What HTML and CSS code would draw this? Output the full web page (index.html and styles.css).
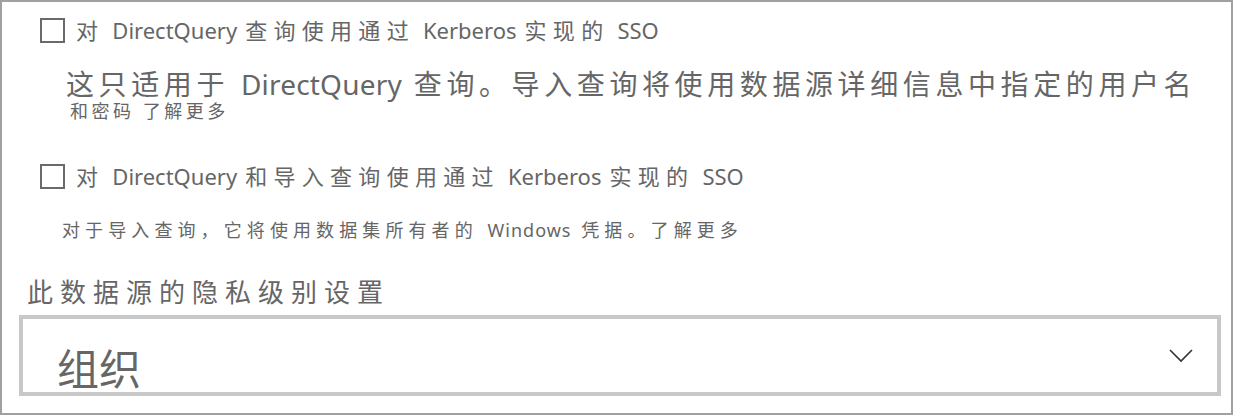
FILE: index.html
```html
<!DOCTYPE html>
<html lang="zh-CN">
<head>
<meta charset="utf-8">
<link rel="stylesheet" href="styles.css">
</head>
<body>
<div class="panel">
  <div class="check-row first">
    <span class="box"></span>
    <span class="label">对 <span class="en">DirectQuery</span> 查询使用通过 <span class="en">Kerberos</span> 实现的 <span class="en">SSO</span></span>
  </div>
  <div class="note-big">这只适用于 <span class="en">DirectQuery</span> 查询。导入查询将使用数据源详细信息中指定的用户名</div>
  <div class="note-tail">和密码 了解更多</div>
  <div class="check-row second">
    <span class="box"></span>
    <span class="label">对 <span class="en">DirectQuery</span> 和导入查询使用通过 <span class="en">Kerberos</span> 实现的 <span class="en">SSO</span></span>
  </div>
  <div class="note-small">对于导入查询，它将使用数据集所有者的 <span class="en">Windows</span> 凭据。了解更多</div>
  <div class="heading">此数据源的隐私级别设置</div>
  <div class="select">
    <span class="value">组织</span>
    <svg class="chev" width="24" height="14" viewBox="0 0 24 14"><path d="M1 1 L12 12 L23 1" fill="none" stroke="#333" stroke-width="1.6"/></svg>
  </div>
</div>
</body>
</html>
```
FILE: styles.css
```css
html, body { margin: 0; padding: 0; background: #fff; }
body { font-family: "Noto Sans", "Noto Sans CJK SC", sans-serif; color: #666; }
.panel {
  box-sizing: border-box;
  width: 1233px;
  height: 415px;
  border: 2px solid #a0a0a0;
  display: flex;
  flex-direction: column;
  overflow: hidden;
}
.check-row { display: flex; align-items: center; }
.check-row.first { margin: 15px 0 0 38px; height: 26px; }
.check-row.second { margin: 42px 0 0 38px; height: 26px; }
.box {
  box-sizing: border-box;
  width: 25px; height: 25px;
  border: 2px solid #6a6a6a;
  margin-right: 11px;
}
.label { font-size: 22px; letter-spacing: 6.3px; word-spacing: -4px; line-height: 26px; white-space: nowrap; }
.label .en { letter-spacing: 0; word-spacing: 0; }
.note-big { margin: 27px 0 0 64px; font-size: 28px; line-height: 28px; letter-spacing: 4.6px; white-space: nowrap; }
.note-big .en { letter-spacing: 0.2px; }
.note-tail { margin: 3px 0 0 68px; font-size: 18px; line-height: 20px; letter-spacing: 3.5px; }
.note-small { margin: 29px 0 0 60px; font-size: 18px; line-height: 24px; letter-spacing: 5.1px; white-space: nowrap; }
.note-small .en { letter-spacing: 1px; }
.heading { margin: 35px 0 0 25px; font-size: 26px; line-height: 30px; letter-spacing: 7px; }
.select {
  box-sizing: border-box;
  margin: 8px 0 0 17px;
  width: 1202px; height: 81px;
  border: 4px solid #c8c8c8;
  display: flex; align-items: center; justify-content: space-between;
  padding: 0 24px 0 34px;
}
.value { font-size: 42px; line-height: 50px; color: #666; margin-top: 26px; }
.chev { display: block; }
```
